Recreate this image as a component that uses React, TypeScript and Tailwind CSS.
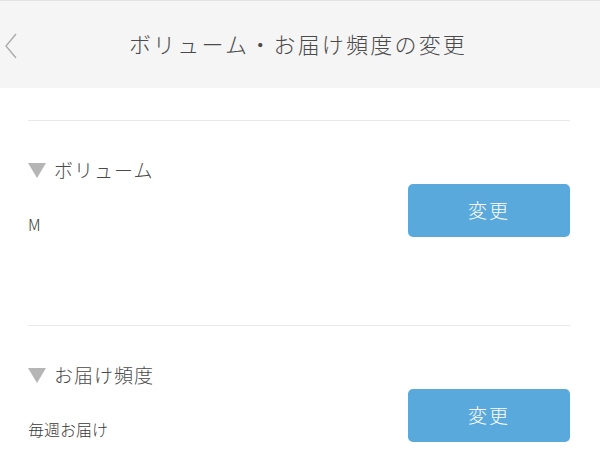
import React from 'react';

const jp = { fontFamily: '"Noto Sans CJK JP", "Noto Sans", sans-serif' };

function Section({ title, value }: { title: string; value: string }) {
	return (
		<div className="border-t border-[#e9e9e9] pt-[35px] pb-[88px]">
			<div className="flex items-center h-[28px]">
				<span className="w-0 h-0 border-l-[9px] border-r-[9px] border-t-[15px] border-l-transparent border-r-transparent border-t-[#b5b5b5] mr-[8px]" />
				<span className="text-[19px] tracking-[1px] text-[#4a4a4a] font-light">{title}</span>
			</div>
			<div className="flex justify-between items-start">
				<div className="mt-[28px] text-[16px] leading-[24px] text-[#3a3a3a] font-light">{value}</div>
				<button className="w-[162px] h-[53px] rounded-[5px] bg-[#5aa9dc] text-white text-[19px] tracking-[2px] font-light">
					変更
				</button>
			</div>
		</div>
	);
}

export default function App() {
	return (
		<div className="w-[600px] h-[472px] bg-white overflow-hidden" style={jp}>
			<div className="relative h-[88px] bg-[#f5f5f5] border-t border-[#e2e2e2] flex items-center justify-center">
				<svg className="absolute left-[4px] top-[31px]" width="14" height="28" viewBox="0 0 14 28">
					<path d="M12 2 L2 14 L12 26" fill="none" stroke="#a8a8a8" strokeWidth="1.3" />
				</svg>
				<h1 className="text-[22px] tracking-[2.2px] text-[#4a4a4a] font-light -mt-[2px] -ml-[4px]">ボリューム・お届け頻度の変更</h1>
			</div>
			<div className="pl-[28px] pr-[30px] pt-[32px]">
				<Section title="ボリューム" value="M" />
				<Section title="お届け頻度" value="毎週お届け" />
			</div>
		</div>
	);
}
